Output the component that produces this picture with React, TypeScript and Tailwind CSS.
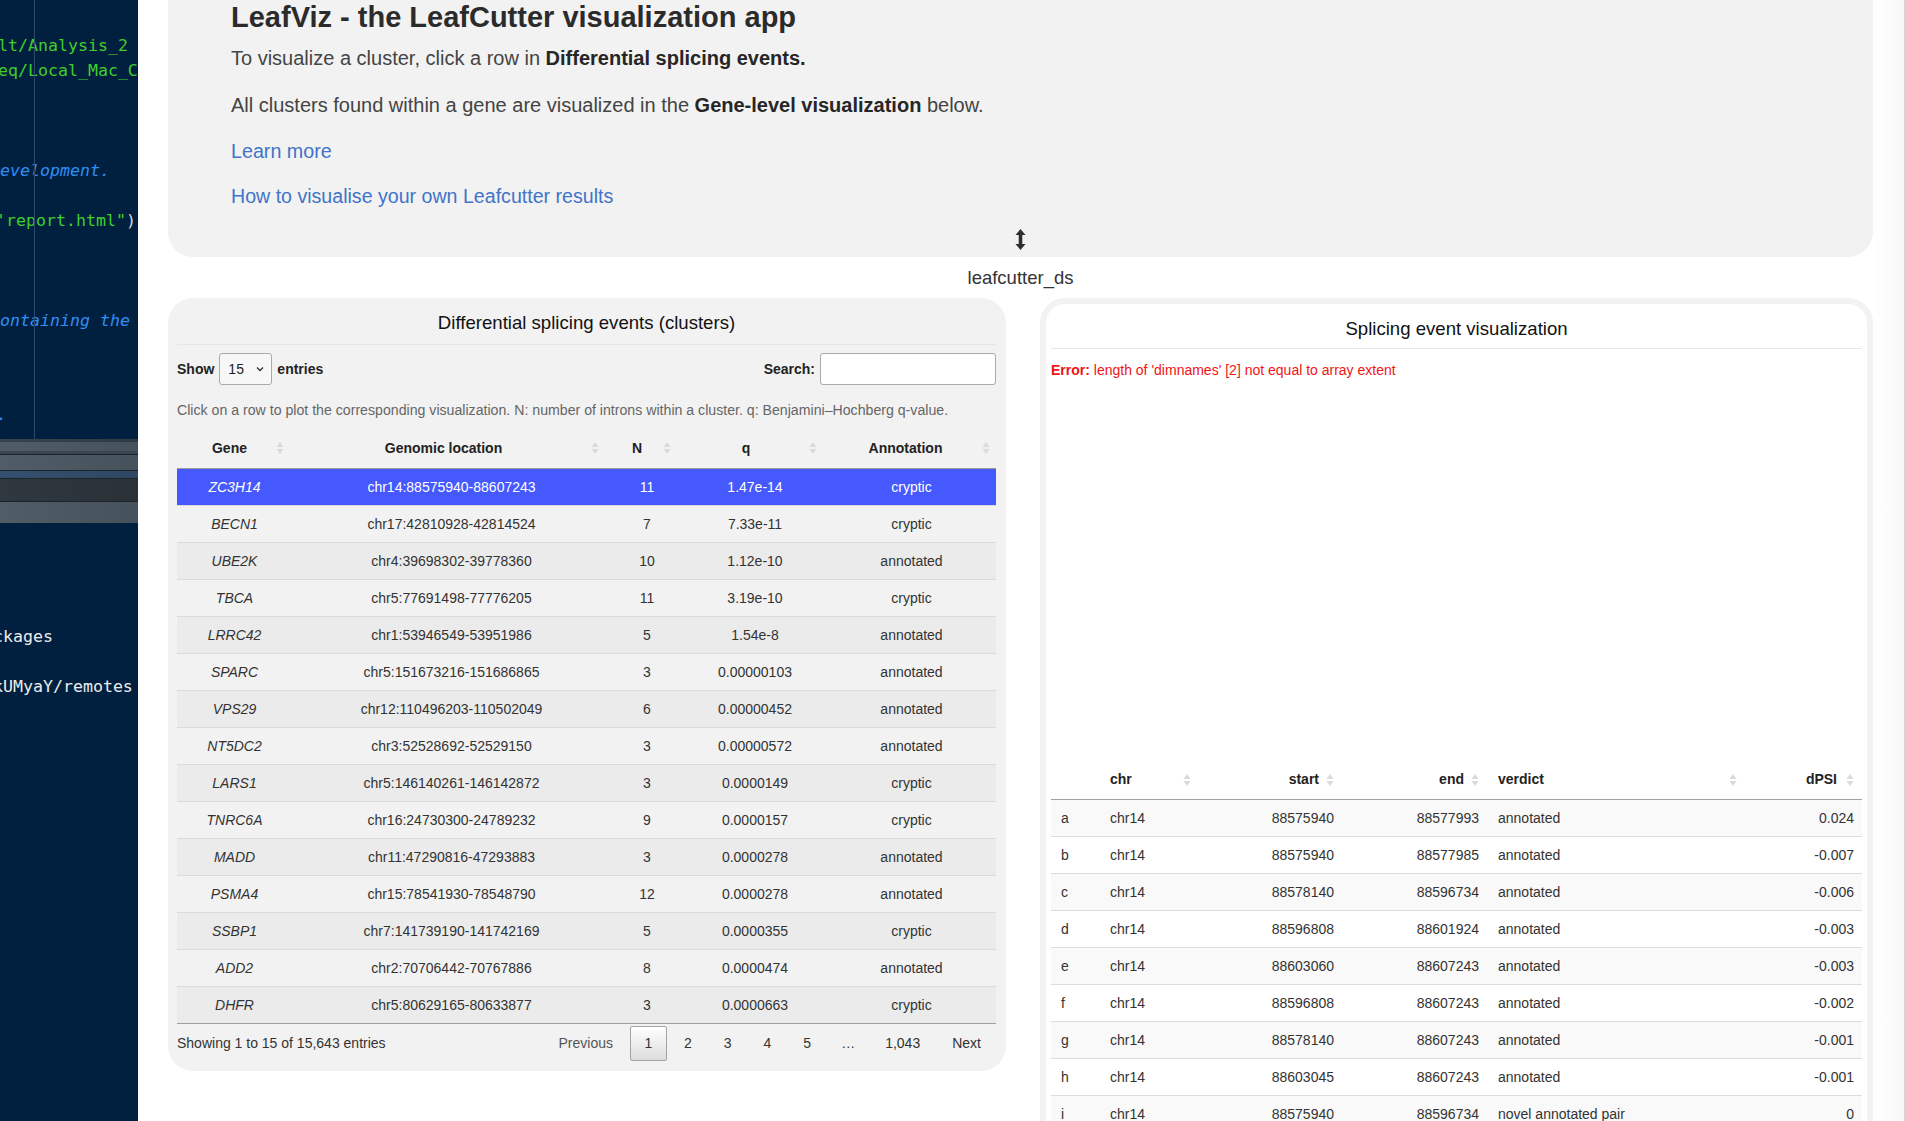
import React from 'react';

const clusters = [
  ['ZC3H14', 'chr14:88575940-88607243', '11', '1.47e-14', 'cryptic'],
  ['BECN1', 'chr17:42810928-42814524', '7', '7.33e-11', 'cryptic'],
  ['UBE2K', 'chr4:39698302-39778360', '10', '1.12e-10', 'annotated'],
  ['TBCA', 'chr5:77691498-77776205', '11', '3.19e-10', 'cryptic'],
  ['LRRC42', 'chr1:53946549-53951986', '5', '1.54e-8', 'annotated'],
  ['SPARC', 'chr5:151673216-151686865', '3', '0.00000103', 'annotated'],
  ['VPS29', 'chr12:110496203-110502049', '6', '0.00000452', 'annotated'],
  ['NT5DC2', 'chr3:52528692-52529150', '3', '0.00000572', 'annotated'],
  ['LARS1', 'chr5:146140261-146142872', '3', '0.0000149', 'cryptic'],
  ['TNRC6A', 'chr16:24730300-24789232', '9', '0.0000157', 'cryptic'],
  ['MADD', 'chr11:47290816-47293883', '3', '0.0000278', 'annotated'],
  ['PSMA4', 'chr15:78541930-78548790', '12', '0.0000278', 'annotated'],
  ['SSBP1', 'chr7:141739190-141742169', '5', '0.0000355', 'cryptic'],
  ['ADD2', 'chr2:70706442-70767886', '8', '0.0000474', 'annotated'],
  ['DHFR', 'chr5:80629165-80633877', '3', '0.0000663', 'cryptic'],
];

const introns = [
  ['a', 'chr14', '88575940', '88577993', 'annotated', '0.024'],
  ['b', 'chr14', '88575940', '88577985', 'annotated', '-0.007'],
  ['c', 'chr14', '88578140', '88596734', 'annotated', '-0.006'],
  ['d', 'chr14', '88596808', '88601924', 'annotated', '-0.003'],
  ['e', 'chr14', '88603060', '88607243', 'annotated', '-0.003'],
  ['f', 'chr14', '88596808', '88607243', 'annotated', '-0.002'],
  ['g', 'chr14', '88578140', '88607243', 'annotated', '-0.001'],
  ['h', 'chr14', '88603045', '88607243', 'annotated', '-0.001'],
  ['i', 'chr14', '88575940', '88596734', 'novel annotated pair', '0'],
];

function SortIcon({ right = false }: { right?: boolean }) {
  return (
    <svg
      width="8"
      height="13"
      viewBox="0 0 8 13"
      className={`absolute top-1/2 -translate-y-1/2 ${right ? 'right-[10px]' : 'right-[6px]'}`}
    >
      <path d="M4 0.5 L7.5 5.5 H0.5 Z" fill="#dadada" />
      <path d="M4 12.5 L7.5 7.5 H0.5 Z" fill="#dadada" />
    </svg>
  );
}

function Terminal() {
  const line = 'h-[25px] leading-[25px] whitespace-pre';
  return (
    <div className="w-[138px] shrink-0 h-full bg-[#01203f] overflow-hidden flex flex-col font-['DejaVu_Sans_Mono',monospace] text-[16.6px]">
      <div className="relative h-[439px] pt-[33px]">
        <div className="absolute left-[34px] top-0 h-full w-px bg-[#2c4a6a]" />
        <div className={`${line} -ml-[2px] text-[#3fcf2b]`}>lt/Analysis_2</div>
        <div className={`${line} -ml-[2px] text-[#3fcf2b]`}>eq/Local_Mac_C</div>
        <div className={line} />
        <div className={line} />
        <div className={line} />
        <div className={`${line} italic text-[#2f8ff6]`}>evelopment.</div>
        <div className={line} />
        <div className={`${line} -ml-[4px] text-[#3fcf2b]`}>'report.html"<span className="text-[#d8d8d8]">)</span></div>
        <div className={line} />
        <div className={line} />
        <div className={line} />
        <div className={`${line} italic text-[#2f8ff6]`}>ontaining the</div>
        <div className={line} />
        <div className={line} />
        <div className={line} />
        <div className={`${line} -mt-[6px] -ml-[4px] text-[#2f8ff6]`}>.</div>
      </div>
      <div className="flex flex-col">
        <div className="h-[3px] bg-gradient-to-r from-[#38444d] to-[#2f3a42]" />
        <div className="h-[9px] bg-gradient-to-r from-[#505d67] to-[#46525b]" />
        <div className="h-[3px] bg-[#3a464f]" />
        <div className="h-px bg-[#1c232a]" />
        <div className="h-[15px] bg-gradient-to-r from-[#505d67] to-[#46525b]" />
        <div className="h-px bg-[#1c232a]" />
        <div className="h-[7px] bg-gradient-to-r from-[#35506f] to-[#2f4761]" />
        <div className="h-px bg-[#1c232a]" />
        <div className="h-[22px] bg-gradient-to-r from-[#2f383f] to-[#2a3238]" />
        <div className="h-px bg-[#1c232a]" />
        <div className="h-[21px] bg-gradient-to-r from-[#505d67] to-[#46525b]" />
      </div>
      <div className="pt-[101px] text-[#ececec]">
        <div className={`${line} -ml-[7px]`}>ckages</div>
        <div className={line} />
        <div className={`${line} -ml-[7px]`}>kUMyaY/remotes</div>
      </div>
    </div>
  );
}

function ClusterTable() {
  const cols = 'grid grid-cols-[113px_315px_72px_146px_173px]';
  return (
    <div>
      <div className={`${cols} h-[41px] border-b border-[#9a9a9a] font-bold text-[#222]`}>
        {['Gene', 'Genomic location', 'N', 'q', 'Annotation'].map((h) => (
          <div key={h} className="relative flex items-center justify-center pl-[10px] pr-[18px]">
            {h}
            <SortIcon />
          </div>
        ))}
      </div>
      {clusters.map((r, i) => {
        const selected = i === 0;
        const last = i === clusters.length - 1;
        return (
          <div
            key={r[0]}
            className={`${cols} h-[37px] border-b ${last ? 'border-[#a0a0a0]' : 'border-[#dadada]'} ${
              selected ? 'bg-[#4659fe] text-white' : i % 2 === 0 ? 'bg-[#ebebeb] text-[#333]' : 'text-[#333]'
            }`}
          >
            <div className="flex items-center justify-center pl-[12px] pr-[10px] italic">{r[0]}</div>
            <div className="flex items-center justify-center pl-[18px] pr-[10px]">{r[1]}</div>
            <div className="flex items-center justify-center pl-[22px] pr-[10px]">{r[2]}</div>
            <div className="flex items-center justify-center pl-[20px] pr-[10px]">{r[3]}</div>
            <div className="flex items-center justify-center pl-[14px] pr-[10px]">{r[4]}</div>
          </div>
        );
      })}
    </div>
  );
}

function IntronTable() {
  const cols = 'grid grid-cols-[49px_97px_147px_145px_254px_121px]';
  return (
    <div>
      <div className={`${cols} h-[40px] border-b border-[#a0a0a0] font-bold text-[#222]`}>
        <div />
        <div className="relative flex items-center pl-[10px]">chr<SortIcon /></div>
        <div className="relative flex items-center justify-end pr-[25px]">start<SortIcon right /></div>
        <div className="relative flex items-center justify-end pr-[25px]">end<SortIcon right /></div>
        <div className="relative flex items-center pl-[9px]">verdict<SortIcon /></div>
        <div className="relative flex items-center justify-end pr-[27px]">dPSI<SortIcon right /></div>
      </div>
      {introns.map((r, i) => (
        <div key={r[0]} className={`${cols} h-[37px] border-b border-[#dddddd] text-[#333] ${i % 2 === 0 ? 'bg-[#f9f9f9]' : 'bg-white'}`}>
          <div className="flex items-center pl-[10px]">{r[0]}</div>
          <div className="flex items-center pl-[10px]">{r[1]}</div>
          <div className="flex items-center justify-end pr-[10px]">{r[2]}</div>
          <div className="flex items-center justify-end pr-[10px]">{r[3]}</div>
          <div className="flex items-center pl-[9px]">{r[4]}</div>
          <div className="flex items-center justify-end pr-[10px]">{r[5]}</div>
        </div>
      ))}
    </div>
  );
}

export default function App() {
  return (
    <div className="flex h-[1121px] w-[1905px] overflow-hidden bg-white font-['Liberation_Sans',Arial,sans-serif] text-[14px] text-[#333]">
      <Terminal />
      <div className="w-[1735px] shrink-0 pl-[30px]">
        <div className="relative h-[258px] w-[1705px] rounded-b-[25px] bg-[#f2f2f2] pl-[63px]">
          <h1 className="-mt-[1px] h-[36px] text-[29px] font-bold leading-[36px] text-[#2b2b2b]">
            LeafViz - the LeafCutter visualization app
          </h1>
          <p className="mt-[9px] h-[28px] text-[20px] leading-[28px] text-[#444]">
            To visualize a cluster, click a row in <b className="text-[#262626]">Differential splicing events.</b>
          </p>
          <p className="mt-[19px] h-[28px] text-[20px] leading-[28px] text-[#444]">
            All clusters found within a gene are visualized in the <b className="text-[#262626]">Gene-level visualization</b> below.
          </p>
          <p className="mt-[18px] h-[28px] text-[19.7px] leading-[28px] text-[#3f74c8]">Learn more</p>
          <p className="mt-[17px] h-[28px] text-[19.6px] leading-[28px] text-[#3f74c8]">How to visualise your own Leafcutter results</p>
          <div className="mt-[19px] -ml-[63px] flex justify-center">
            <svg width="11" height="21" viewBox="0 0 11 21">
              <path d="M5.5 0 L10.5 6 H7.3 V15 H10.5 L5.5 21 L0.5 15 H3.7 V6 H0.5 Z" fill="#2e2e2e" />
            </svg>
          </div>
        </div>
        <div className="flex h-[41px] w-[1705px] items-center justify-center text-[18.5px] text-[#333]">leafcutter_ds</div>
        <div className="flex w-[1705px] items-start gap-[34px]">
          <div className="w-[838px] rounded-[25px] bg-[#f2f2f2] px-[9px] pb-[10px] pr-[10px]">
            <div className="flex h-[47px] items-center justify-center border-b border-[#e6e6e6] pt-[4px] text-[18.6px] text-[#111]">
              Differential splicing events (clusters)
            </div>
            <div className="flex h-[48px] items-center justify-between">
              <div className="flex items-center gap-[5px] font-bold text-[#222]">
                <span>Show</span>
                <div className="flex h-[32px] w-[53px] items-center justify-between rounded-[3px] border border-[#aaa] bg-[#f7f7f7] pl-[8px] pr-[7px] font-normal text-[#222]">
                  <span>15</span>
                  <svg width="8" height="6" viewBox="0 0 8 6">
                    <path d="M1 1.5 L4 4.5 L7 1.5" stroke="#333" strokeWidth="1.3" fill="none" />
                  </svg>
                </div>
                <span>entries</span>
              </div>
              <div className="flex items-center gap-[5px] font-bold text-[#222]">
                <span>Search:</span>
                <div className="h-[32px] w-[176px] rounded-[3px] border border-[#aaa] bg-white" />
              </div>
            </div>
            <div className="flex h-[35px] items-center text-[14.15px] text-[#666]">
              Click on a row to plot the corresponding visualization. N: number of introns within a cluster. q: Benjamini–Hochberg q-value.
            </div>
            <ClusterTable />
            <div className="mt-[2px] flex h-[35px] items-center justify-between text-[#333]">
              <span>Showing 1 to 15 of 15,643 entries</span>
              <div className="flex items-center">
                <span className="px-[14px] text-[#555]">Previous</span>
                <span className="ml-[3px] flex h-[35px] w-[37px] items-center justify-center rounded-[2px] border border-[#a3a3a3] bg-gradient-to-b from-[#ffffff] to-[#dcdcdc]">1</span>
                {['2', '3', '4', '5'].map((p) => (
                  <span key={p} className="ml-[2px] px-[15px]">{p}</span>
                ))}
                <span className="ml-[2px] px-[13px]">…</span>
                <span className="ml-[2px] px-[15px]">1,043</span>
                <span className="ml-[2px] px-[15px]">Next</span>
              </div>
            </div>
          </div>
          <div className="h-[900px] w-[833px] rounded-[25px] border-[6px] border-[#f2f2f2] bg-white px-[5px] pt-[1px]">
            <div className="flex h-[44px] items-center justify-center border-b border-[#e6e6e6] pt-[4px] text-[18.6px] text-[#111]">
              Splicing event visualization
            </div>
            <div className="flex h-[41px] items-center pt-[1px] text-[#f01414]">
              <b>Error:</b>&nbsp;length of 'dimnames' [2] not equal to array extent
            </div>
            <div className="h-[370px]" />
            <IntronTable />
          </div>
        </div>
      </div>
      <div className="flex-1 border-r border-[#d2d2d2] bg-gradient-to-r from-white to-[#f8f8f8]" />
    </div>
  );
}
